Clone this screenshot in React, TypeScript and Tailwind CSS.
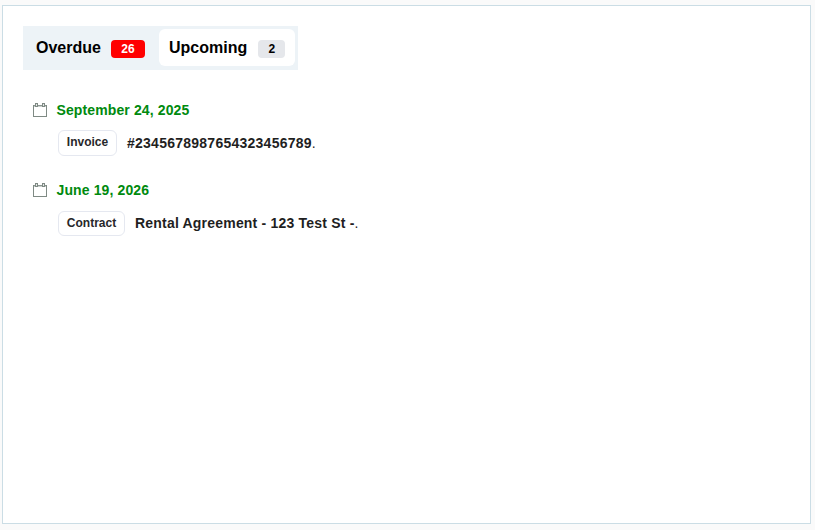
const font = "font-['Liberation_Sans',Arial,sans-serif]";

function CalendarIcon() {
  return (
    <svg width="14" height="14" viewBox="0 0 14 14" fill="none" className="mr-[9.5px] shrink-0">
      <rect x="0.5" y="2.5" width="13" height="11" fill="#ffffff" stroke="#7f8a84" />
      <path d="M1 3h12" stroke="#98a29d" />
      <rect x="2.5" y="0.5" width="2" height="3" fill="#e3e7e5" stroke="#7f8a84" />
      <rect x="9.5" y="0.5" width="2" height="3" fill="#e3e7e5" stroke="#7f8a84" />
    </svg>
  );
}

function Entry({
  date,
  tag,
  title,
  rowClass,
  tagClass,
  titleClass,
}: {
  date: string;
  tag: string;
  title: string;
  rowClass: string;
  tagClass: string;
  titleClass: string;
}) {
  return (
    <section className="pl-[10px]">
      <div className="flex h-5 items-center">
        <CalendarIcon />
        <span className="text-[14px] font-bold tracking-[0.12px] text-[#008a0e]">{date}</span>
      </div>
      <div className={`flex items-center pl-[25px] ${rowClass}`}>
        <span
          className={`flex items-center justify-center rounded-md border border-[#e5e8f0] bg-white text-[12px] font-bold text-[#27272a] ${tagClass}`}
        >
          {tag}
        </span>
        <p className="ml-[10px] text-[14px] text-[#1f1f1f]">
          <span className={`font-bold ${titleClass}`}>{title}</span>.
        </p>
      </div>
    </section>
  );
}

export default function App() {
  return (
    <div className={`h-[530px] w-[815px] bg-[#fafafa] pl-[2px] pt-[5px] ${font}`}>
      <div className="h-[519px] w-[809px] border border-[#cbdde5] bg-white px-5 pt-5">
        <div className="flex h-11 w-[275px] items-start bg-[#edf3f7] pl-[13px] pr-[3px] pt-[3px]">
          <div className="flex h-[37px] w-[123px] items-center">
            <span className="text-[16px] font-bold text-black">Overdue</span>
            <span className="ml-[10px] mt-[3px] flex h-[18px] w-[34px] items-center justify-center rounded bg-[#ff0000] text-[12px] font-bold text-white">
              26
            </span>
          </div>
          <div className="flex h-[37px] w-[136px] items-center rounded-md bg-white pl-[10px]">
            <span className="text-[16px] font-bold text-black">Upcoming</span>
            <span className="ml-[11px] mt-[3px] flex h-[18px] w-[27px] items-center justify-center rounded bg-[#e5e7eb] text-[12px] font-bold text-black">
              2
            </span>
          </div>
        </div>
        <div className="mt-[30px] flex flex-col gap-[24px]">
          <Entry
            date="September 24, 2025"
            tag="Invoice"
            title="#2345678987654323456789"
            rowClass="mt-[10px]"
            tagClass="h-[26px] w-[59px] pb-[2px]"
            titleClass="tracking-[0.25px]"
          />
          <Entry
            date="June 19, 2026"
            tag="Contract"
            title="Rental Agreement - 123 Test St -"
            rowClass="mt-[11px]"
            tagClass="h-[25px] w-[67px] pb-[1px]"
            titleClass="tracking-[0.2px]"
          />
        </div>
      </div>
    </div>
  );
}
